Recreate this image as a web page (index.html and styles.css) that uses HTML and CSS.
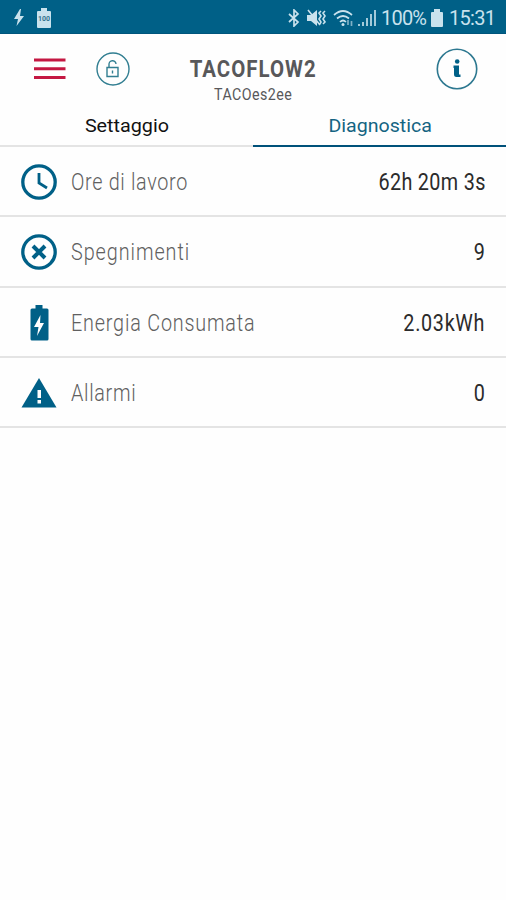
FILE: index.html
```html
<!DOCTYPE html>
<html lang="it">
<head>
<meta charset="utf-8">
<title>TACOFLOW2</title>
<link rel="stylesheet" href="styles.css">
</head>
<body>
<div class="status">
  <div class="status-left">
    <svg width="10" height="18" viewBox="0 0 10 18"><path d="M6 0 0 10h4L2.500 17 10 7H6l1-7z"/></svg>
    <svg width="14" height="20" viewBox="0 0 14 20"><path d="M4 0h6v3h3a1 1 0 0 1 1 1v15a1 1 0 0 1-1 1H1a1 1 0 0 1-1-1V4a1 1 0 0 1 1-1h3z"/><text class="tiny" x="7" y="13" text-anchor="middle">100</text></svg>
  </div>
  <div class="status-right">
    <svg class="line" width="12" height="18" viewBox="0 0 12 18"><path d="m1 5 9 8-4 4V1l4 4-9 8"/></svg>
    <svg class="mute" width="20" height="18" viewBox="0 0 20 18"><path d="M0 6h4l6-5v16l-6-5H0z"/><path class="stroke" d="m1 1 12 15M14 2l-2 2 2 3-2 3 2 3-1 2M18 2l-2 2 2 3-2 3 2 3-2 2"/></svg>
    <svg class="line" width="21" height="18" viewBox="0 0 21 18"><path d="M1 6Q10-2 19 6M4 9.500q6-5 12 0M7 13q3-3 6 0"/><circle class="dot" cx="10" cy="15.500" r="1.500"/><path class="faint" d="M15 11v5M18.500 12v5"/></svg>
    <svg class="signal" width="18" height="18" viewBox="0 0 18 18"><path d="M0 15h2v2H0zM4 13h2v4H4zM8 9h2v8H8zM12 5h2v12h-2zM16 1h2v16h-2z"/></svg>
    <span class="percent">100%</span>
    <svg class="cell" width="12" height="18" viewBox="0 0 12 18"><path d="M3 0h6v3h2a1 1 0 0 1 1 1v13a1 1 0 0 1-1 1H1a1 1 0 0 1-1-1V4a1 1 0 0 1 1-1h2z"/></svg>
    <span class="time">15:31</span>
  </div>
</div>
<header class="header">
  <div class="actions">
    <svg width="32" height="22" viewBox="0 0 32 22"><path class="burger" d="M0 2h31.500M0 10.800h31.500M0 19.500h31.500"/></svg>
    <svg class="lock" width="34" height="34" viewBox="0 0 34 34"><circle cx="17" cy="17" r="16"/><path d="M11 15.500h11v9H11zM13 15.500v-3a3.500 3.500 0 0 1 7-.5M16.500 18.500v3"/></svg>
  </div>
  <div class="titles">
    <h1>TACOFLOW2</h1>
    <p>TACOes2ee</p>
  </div>
  <svg class="info" width="42" height="42" viewBox="0 0 42 42"><circle class="ring" cx="21" cy="21" r="19.700"/><circle cx="21.200" cy="13.500" r="2.300"/><path d="M17.500 17.500H23v9h1.500V29h-4c-2 0-2.500-1-2.500-3v-6h-.5z"/></svg>
</header>
<nav class="tabs">
  <div class="tab"><span class="tab-a">Settaggio</span></div>
  <div class="tab active"><span class="tab-b">Diagnostica</span></div>
</nav>
<main class="rows">
  <div class="row">
    <svg width="36" height="36" viewBox="0 0 36 36"><g class="outline"><circle cx="18" cy="18" r="16.200"/><path class="hands" d="M18 9v10l8 5"/></g></svg>
    <span class="label l1">Ore di lavoro</span><span class="value v1">62h 20m 3s</span>
  </div>
  <div class="row">
    <svg width="36" height="36" viewBox="0 0 36 36"><g class="outline"><circle cx="18" cy="18" r="16.200"/><path class="cross" d="m12 12 12 12M24 12 12 24"/></g></svg>
    <span class="label l2">Spegnimenti</span><span class="value v2">9</span>
  </div>
  <div class="row">
    <svg width="36" height="36" viewBox="0 0 36 36"><path d="M14.500 0h7v3.500H26a1.500 1.500 0 0 1 1.500 1.500v29a1.500 1.500 0 0 1-1.500 1.500H11A1.500 1.500 0 0 1 9.500 34V5A1.500 1.500 0 0 1 11 3.500h3.500z"/><path class="cut" d="M19.500 10 13 22h4.500l-1.500 9 7-13h-4z"/></svg>
    <span class="label l3">Energia Consumata</span><span class="value v3">2.03kWh</span>
  </div>
  <div class="row">
    <svg width="36" height="36" viewBox="0 0 36 36"><path d="M18 3 35.500 32.500H.500z"/><path class="cut" d="M16.500 15h3.500v8h-3.500zM16.500 25h3.500v3.500h-3.500z"/></svg>
    <span class="label l4">Allarmi</span><span class="value v4">0</span>
  </div>
</main>
</body>
</html>
```

FILE: styles.css
```css
* { box-sizing: border-box; }
body { margin: 0; background: #fefefe; font-family: Roboto, "Liberation Sans", sans-serif; height: 900px; overflow: hidden; }
svg { display: block; flex: none; }
.status { height: 34px; background: #006087; display: flex; justify-content: space-between; align-items: center; padding: 2px 11px 0 14px; color: #c9e2ed; border-bottom: 1px solid #00557c; }
.status svg { fill: #c9e2ed; }
.status-left { display: flex; align-items: center; gap: 13px; }
.status .tiny { font-size: 7px; font-weight: 700; fill: #33718c; }
.status-right { display: flex; align-items: center; }
.status .line { fill: none; stroke: #c9e2ed; stroke-width: 1.7; }
.line .dot { fill: #c9e2ed; stroke: none; }
.line .faint { stroke: #7fb1c6; }
.status-right .line { margin-right: 7px; }
.mute { margin-right: 6px; }
.mute .stroke { fill: none; stroke: #c9e2ed; stroke-width: 1.6; }
.status-right .signal { margin: 0 5px 0 -3px; fill: #a3cad9; }
.percent, .time { font-size: 20px; line-height: 24px; white-space: nowrap; }
.percent { width: 45px; letter-spacing: -.8px; }
.cell { margin: 0 6px 0 5px; }
.time { width: 46px; letter-spacing: -.7px; }
.header { height: 70px; display: grid; grid-template-columns: 1fr auto 1fr; padding: 0 28px; }
.actions { display: flex; gap: 30px; align-items: center; height: 70px; padding-left: 6px; }
.burger { stroke: #c41842; stroke-width: 3; }
.lock { fill: none; stroke: #317e91; stroke-width: 1.4; }
.titles { text-align: center; color: #58585a; padding-top: 21px; }
h1 { margin: 0; font-size: 24px; line-height: 28px; font-weight: 700; letter-spacing: 1.2px; transform: translateX(.5px) scaleX(.85); }
p { margin: 0; font-size: 16px; line-height: 24px; letter-spacing: .5px; transform: translateX(.5px) scaleX(.89); }
.info { justify-self: end; margin-top: 14px; fill: #006087; }
.info .ring { fill: none; stroke: #2d7890; stroke-width: 1.6; }
.tabs { height: 43px; display: flex; }
.tab { flex: 1; text-align: center; font-size: 19px; line-height: 43px; border-bottom: 2px solid #e4e4e4; color: #111; }
.tab span { display: inline-block; }
.tab-a { transform: translateX(.5px) scaleX(1.04); }
.tab-b { transform: translateX(1px) scaleX(1.03); }
.active { color: #146482; border-bottom-color: #00517a; }
.row { height: 70.3px; display: flex; align-items: center; padding: 0 21px; border-bottom: 2px solid #e4e4e4; }
.row svg { fill: #006087; margin-top: 2px; }
.row .outline { fill: none; stroke: #006087; stroke-width: 3.3; }
.outline .hands { stroke-width: 2.8; }
.outline .cross { stroke-width: 4; }
.row .cut { fill: #fefefe; }
.label, .value { padding-top: 4px; font-size: 23px; line-height: 30px; white-space: nowrap; transform: scaleX(.86); }
.label { margin-left: 14px; font-weight: 300; letter-spacing: .8px; color: #606060; transform-origin: left; }
.l2 { letter-spacing: 1.100px; }
.l3 { letter-spacing: .95px; }
.value { margin-left: auto; margin-right: -.5px; letter-spacing: .4px; color: #2b2b2b; transform-origin: right; }
.v3 { letter-spacing: .8px; }
```
